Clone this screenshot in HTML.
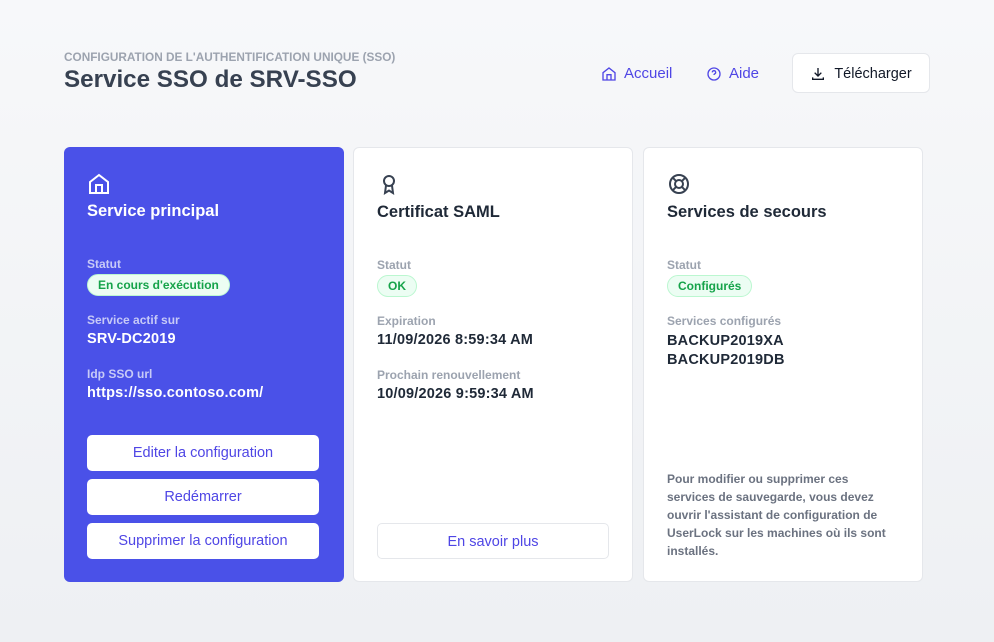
<!DOCTYPE html>
<html><head><meta charset="utf-8"><style>
*{margin:0;padding:0;box-sizing:border-box}
body{width:994px;height:642px;overflow:hidden;font-family:"Liberation Sans",sans-serif;background:linear-gradient(#f7f8fa,#eef0f3);position:relative;color:#374151}
.a{position:absolute;white-space:nowrap}
.card{position:absolute;top:147px;width:280px;height:435px;border-radius:6px;background:#fff;border:1px solid #e5e7eb}
.lbl{font-size:12px;font-weight:bold;color:#9ca3af}
.val{font-size:14.5px;font-weight:bold;color:#1f2937;letter-spacing:.2px}
.badge{font-size:12px;font-weight:bold;color:#16a34a;background:#ecfdf3;border:1px solid #bbf7d0;border-radius:11px;padding:3px 10px}
.btn{position:absolute;left:23px;width:232px;height:36px;border-radius:5px;background:#fff;border:1px solid #e5e7eb;color:#4f46e5;font-size:14.5px;text-align:center;line-height:37px}
h3{position:absolute;left:23px;top:55px;font-size:16.5px;font-weight:bold;color:#1f2937}
</style></head><body>
<div class="a" style="left:64px;top:50px;font-size:11.8px;font-weight:bold;color:#9ca3af">CONFIGURATION DE L'AUTHENTIFICATION UNIQUE (SSO)</div>
<div class="a" style="left:64px;top:66px;font-size:24.2px;font-weight:bold;color:#374151">Service SSO de SRV-SSO</div>
<div class="a" style="left:601px;top:65px;font-size:15px;color:#4f46e5;display:flex;align-items:center;gap:7px">
<svg width="16" height="16" viewBox="0 0 24 24" fill="none" stroke="#4f46e5" stroke-width="2"><path d="M3 10l9-7 9 7v11H3z M9 21v-8h6v8"/></svg>Accueil</div>
<div class="a" style="left:706px;top:65px;font-size:15px;color:#4f46e5;display:flex;align-items:center;gap:7px">
<svg width="16" height="16" viewBox="0 0 24 24" fill="none" stroke="#4f46e5" stroke-width="2"><circle cx="12" cy="12" r="9"/><path d="M9.5 9.5a2.5 2.5 0 1 1 3.5 2.3c-.7.4-1 .9-1 1.7M12 17v.1"/></svg>Aide</div>
<div class="a" style="left:792px;top:53px;width:138px;height:40px;background:#fff;border:1px solid #e5e7eb;border-radius:6px;font-size:14.5px;color:#111827;display:flex;align-items:center;justify-content:center;gap:8px;padding-top:2px">
<svg width="16" height="16" viewBox="0 0 24 24" fill="none" stroke="#111827" stroke-width="2"><path d="M12 3v12M7 10l5 5 5-5M4 17v3h16v-3"/></svg>Télécharger</div>

<div class="card" style="left:64px;background:#4a51e8;border:none">
<svg class="a" style="left:23px;top:25px" width="24" height="24" viewBox="0 0 24 24" fill="none" stroke="#fff" stroke-width="2"><path d="M3 10l9-7 9 7v11H3z M9 21v-8h6v8"/></svg>
<h3 style="color:#fff">Service principal</h3>
<div class="a lbl" style="left:23px;top:110px;color:#c7caf7">Statut</div>
<div class="a badge" style="left:23px;top:127px">En cours d'exécution</div>
<div class="a lbl" style="left:23px;top:166px;color:#c7caf7">Service actif sur</div>
<div class="a val" style="left:23px;top:184px;color:#fff">SRV-DC2019</div>
<div class="a lbl" style="left:23px;top:220px;color:#c7caf7">Idp SSO url</div>
<div class="a val" style="left:23px;top:238px;color:#fff">https://sso.contoso.com/</div>
<div class="btn" style="top:288px;border:none">Editer la configuration</div>
<div class="btn" style="top:332px;border:none">Redémarrer</div>
<div class="btn" style="top:376px;border:none">Supprimer la configuration</div>
</div>

<div class="card" style="left:353px">
<svg class="a" style="left:23px;top:24px" width="24" height="24" viewBox="0 0 24 24" fill="none" stroke="#374151" stroke-width="2"><circle cx="12" cy="9" r="5"/><path d="M9 13.5L8 21l4-2.5 4 2.5-1-7.5"/></svg>
<h3>Certificat SAML</h3>
<div class="a lbl" style="left:23px;top:110px">Statut</div>
<div class="a badge" style="left:23px;top:127px">OK</div>
<div class="a lbl" style="left:23px;top:166px">Expiration</div>
<div class="a val" style="left:23px;top:184px">11/09/2026 8:59:34 AM</div>
<div class="a lbl" style="left:23px;top:220px">Prochain renouvellement</div>
<div class="a val" style="left:23px;top:238px">10/09/2026 9:59:34 AM</div>
<div class="btn" style="top:375px">En savoir plus</div>
</div>

<div class="card" style="left:643px">
<svg class="a" style="left:23px;top:24px" width="24" height="24" viewBox="0 0 24 24" fill="none" stroke="#374151" stroke-width="2"><circle cx="12" cy="12" r="9"/><circle cx="12" cy="12" r="4"/><path d="M5.6 5.6l3.6 3.6M14.8 14.8l3.6 3.6M18.4 5.6l-3.6 3.6M9.2 14.8l-3.6 3.6"/></svg>
<h3>Services de secours</h3>
<div class="a lbl" style="left:23px;top:110px">Statut</div>
<div class="a badge" style="left:23px;top:127px">Configurés</div>
<div class="a lbl" style="left:23px;top:166px">Services configurés</div>
<div class="a val" style="left:23px;top:184px;line-height:19px">BACKUP2019XA<br>BACKUP2019DB</div>
<div class="a" style="left:23px;top:322px;font-size:12px;font-weight:bold;color:#6b7280;line-height:18px">Pour modifier ou supprimer ces<br>services de sauvegarde, vous devez<br>ouvrir l'assistant de configuration de<br>UserLock sur les machines où ils sont<br>installés.</div>
</div>
</body></html>
